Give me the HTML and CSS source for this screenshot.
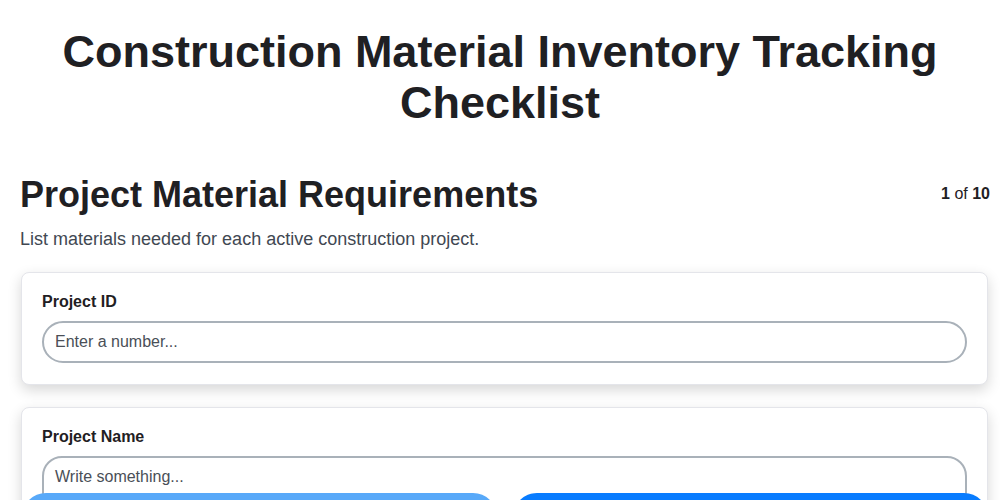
FILE: index.html
```html
<!DOCTYPE html>
<html lang="en">
<head>
    <meta charset="UTF-8">
    <meta name="viewport" content="width=device-width, initial-scale=1.0">
    <title>Construction Material Inventory Tracking Checklist</title>
    <link rel="stylesheet" href="styles.css">
</head>
<body>
    <h1 class="page-title">Construction Material Inventory Tracking Checklist</h1>

    <div class="section-head">
        <h2>Project Material Requirements</h2>
        <div class="counter"><strong>1</strong> of <strong>10</strong></div>
    </div>
    <p class="section-desc">List materials needed for each active construction project.</p>

    <div class="card">
        <label for="projectId">Project ID</label>
        <input type="text" id="projectId" class="field" placeholder="Enter a number...">
    </div>

    <div class="card">
        <label for="projectName">Project Name</label>
        <textarea id="projectName" class="field area" placeholder="Write something..."></textarea>
    </div>

    <!-- nav buttons sit just under the fold -->
    <div class="nav-bar">
        <button class="nav-btn prev" aria-label="Previous"></button>
        <button class="nav-btn next" aria-label="Next"></button>
    </div>
</body>
</html>
```

FILE: styles.css
```css
* {
    box-sizing: border-box;
}

html {
    scrollbar-width: none;
}

body {
    font-family: 'Liberation Sans', Arial, sans-serif;
    color: #1f2023;
    background: #fff;
    margin: 0;
    padding: 0 10px 120px 20px;
}

.page-title {
    text-align: center;
    font-size: 45px;
    line-height: 51px;
    font-weight: 700;
    margin: 26px 30px 46px 20px;
}

.section-head {
    display: flex;
    justify-content: space-between;
    align-items: flex-start;
}

.section-head h2 {
    font-size: 36px;
    line-height: 42px;
    font-weight: 700;
    margin: 0;
}

.counter {
    font-size: 16px;
    color: #1f2023;
    padding-top: 11px;
}

.section-desc {
    font-size: 18px;
    color: #414852;
    margin: 13px 0 22px 0;
}

.card {
    background: #fff;
    border: 1px solid #e4e5ea;
    border-radius: 8px;
    padding: 20px 20px 21px 20px;
    margin: 0 2px 22px 1px;
    box-shadow: 0 5px 14px rgba(0, 0, 0, 0.16);
}

label {
    display: block;
    font-size: 16px;
    font-weight: 700;
    color: #1f2023;
    margin-bottom: 10px;
}

.field {
    display: block;
    width: 100%;
    height: 42px;
    padding: 0 11px;
    border: 2px solid #a9b1b9;
    border-radius: 21px;
    font-family: 'Liberation Sans', Arial, sans-serif;
    font-size: 16px;
    color: #1f2023;
    background: #fff;
}

.field::placeholder {
    color: #4a4f57;
}

.field.area {
    height: 90px;
    padding: 10px 11px;
    border-radius: 20px;
    resize: none;
}

.nav-bar {
    position: fixed;
    left: 22px;
    right: 12px;
    top: 493px;
    display: flex;
    gap: 16px;
}

.nav-btn {
    flex: 1;
    height: 48px;
    border: none;
    border-radius: 24px;
}

.prev {
    background: #58a9f9;
}

.next {
    background: #087cff;
}
```
